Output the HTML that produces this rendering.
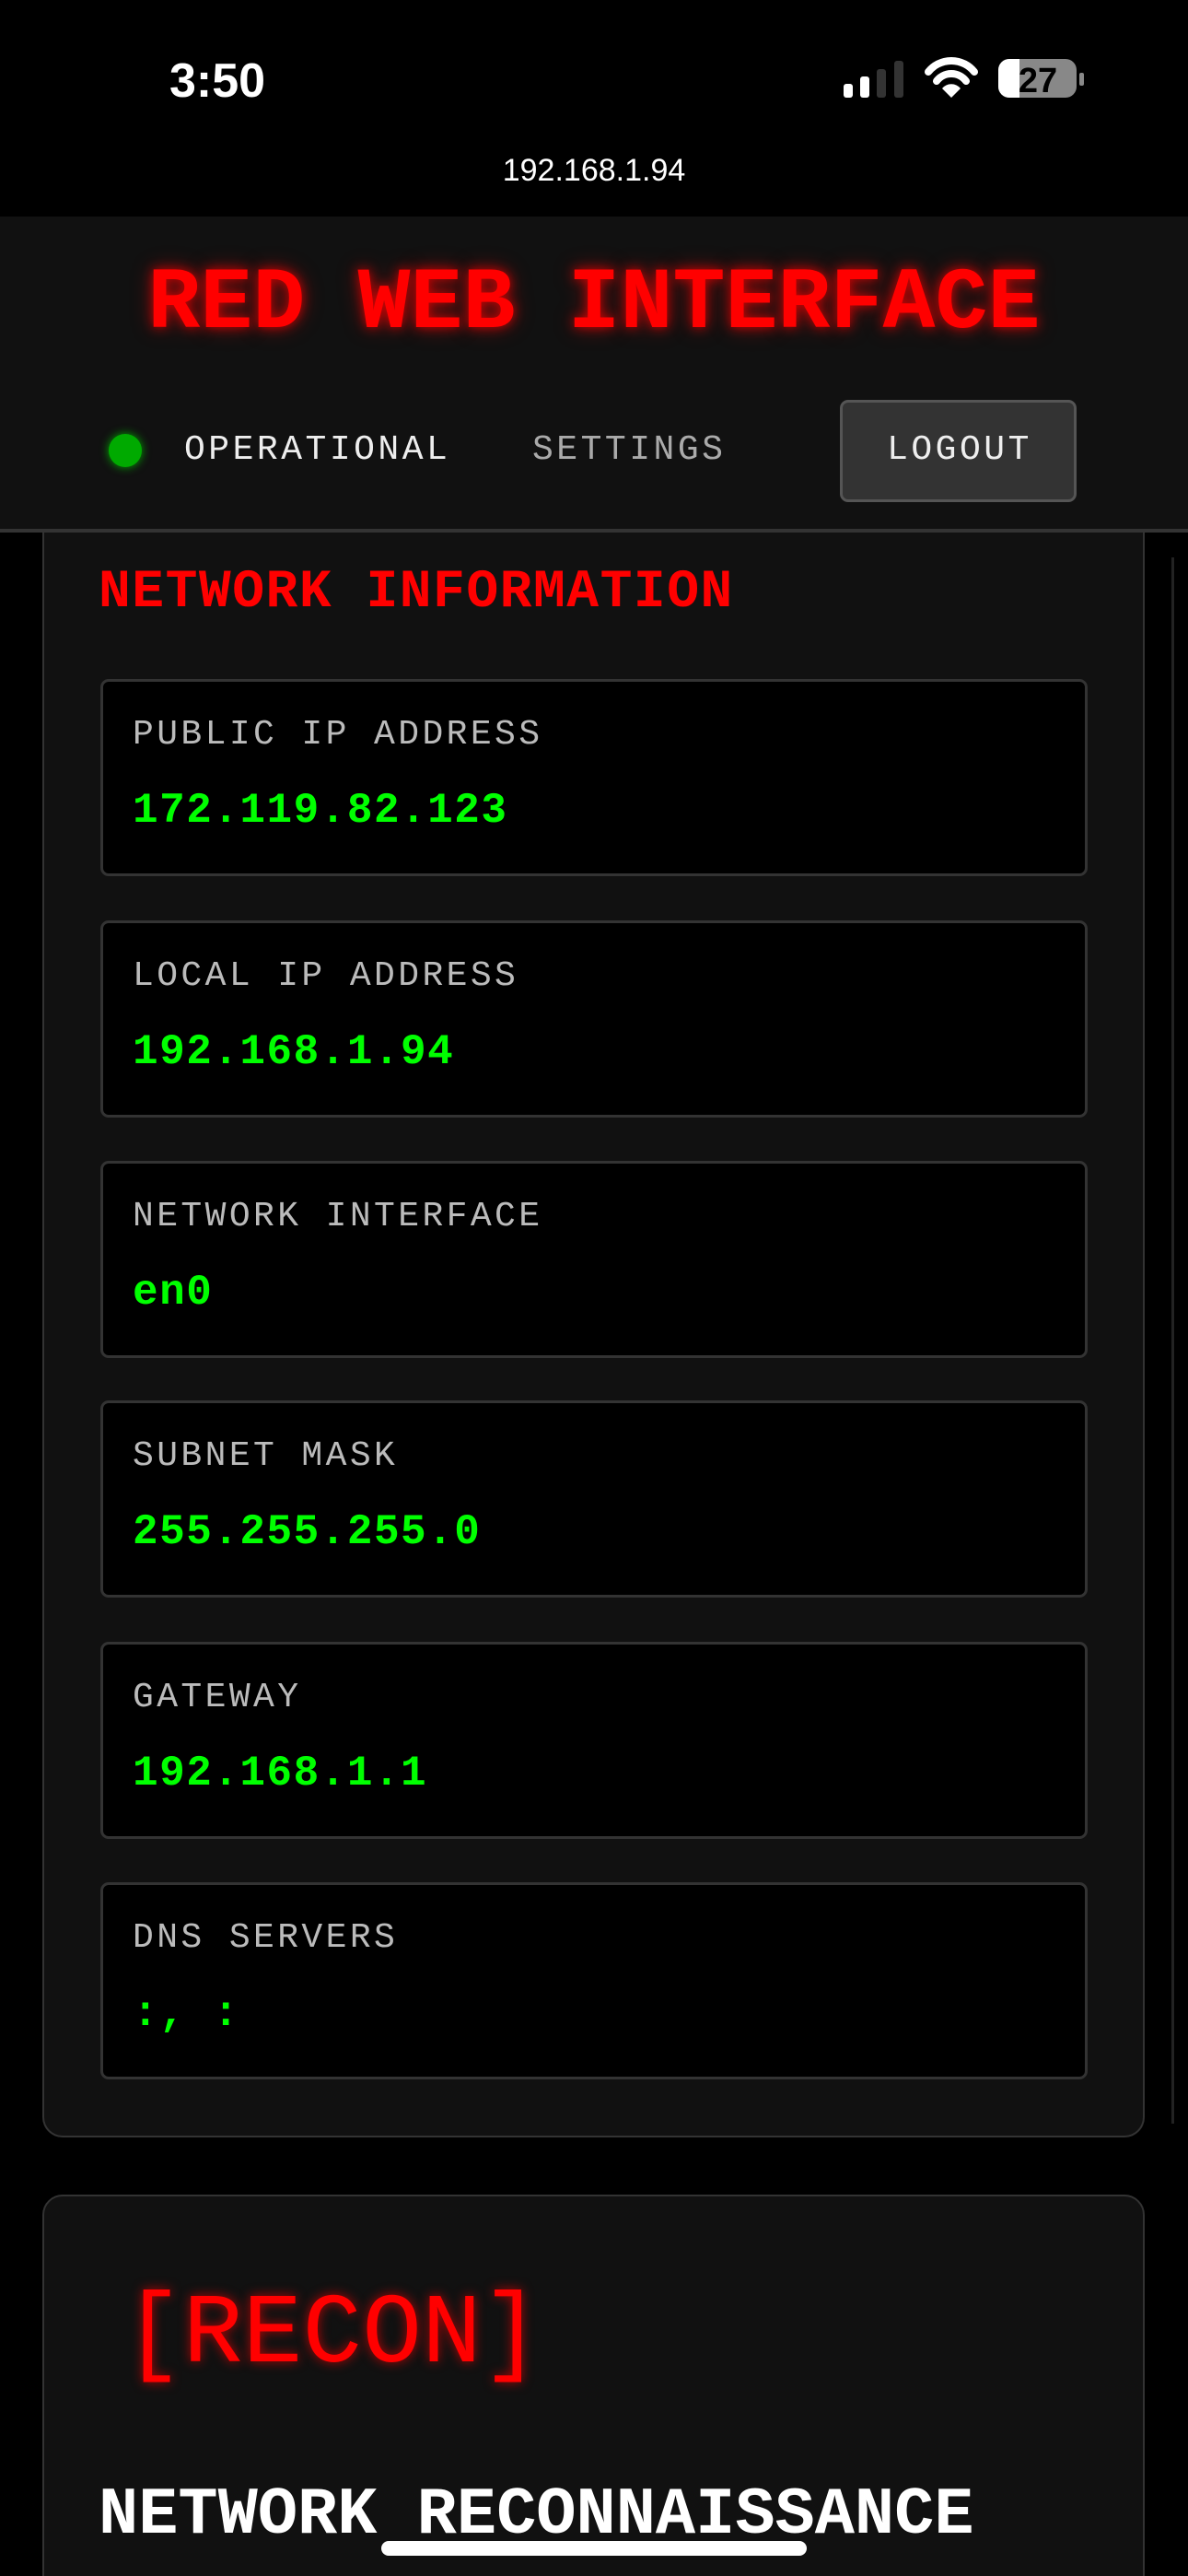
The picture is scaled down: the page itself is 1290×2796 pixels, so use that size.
<!DOCTYPE html>
<html><head><meta charset="utf-8"><style>
*{margin:0;padding:0;box-sizing:border-box}
html,body{width:1290px;height:2796px;background:#000;overflow:hidden}
body{position:relative;font-family:"Liberation Mono","Courier New",monospace}
.abs{position:absolute}
.sys{font-family:"Liberation Sans",sans-serif;color:#fff}
.header{left:0;top:235px;width:1290px;height:343px;background:#111;border-bottom:4px solid #333}
.title{left:0;width:1290px;top:282px;text-align:center;font-weight:bold;font-size:95px;line-height:96px;color:#f00;text-shadow:0 0 12px rgba(255,0,0,.75),0 0 24px rgba(255,0,0,.4);white-space:pre}
.nav{font-size:38px;line-height:40px;letter-spacing:3.5px;white-space:pre}
.card{left:46px;width:1197px;background:#111;border:2px solid #333;border-radius:22px}
.box{left:109px;width:1072px;height:214px;background:#000;border:3px solid #333;border-radius:9px}
.lbl{position:absolute;left:32px;top:38px;font-size:38px;line-height:40px;letter-spacing:3.4px;color:#bbb;white-space:pre}
.val{position:absolute;left:32px;top:115px;font-size:46px;line-height:50px;letter-spacing:1.5px;color:#0f0;font-weight:bold;white-space:pre}
</style></head><body>
<div class="abs sys" style="left:184px;top:58px;font-size:52px;font-weight:bold;line-height:60px">3:50</div>
<svg class="abs" style="left:900px;top:40px" width="300" height="100" viewBox="900 40 300 100">
<rect x="916" y="91" width="10" height="15" rx="3" fill="#fff"/>
<rect x="934" y="83" width="10" height="23" rx="3" fill="#fff"/>
<rect x="952" y="75" width="10" height="31" rx="3" fill="#333"/>
<rect x="971" y="66" width="10" height="40" rx="3" fill="#333"/>
<path d="M1008 78 A32 32 0 0 1 1058 78" stroke="#fff" stroke-width="8" fill="none" stroke-linecap="round"/>
<path d="M1017 88 A20 20 0 0 1 1049 88" stroke="#fff" stroke-width="8" fill="none" stroke-linecap="round"/>
<path d="M1023 96 L1033 106 L1043 96 A13 13 0 0 0 1023 96Z" fill="#fff"/>
<rect x="1084" y="64" width="85" height="42" rx="12" fill="#888"/>
<path d="M1096 64 H1107 V106 H1096 A12 12 0 0 1 1084 94 V76 A12 12 0 0 1 1096 64Z" fill="#fff"/>
<rect x="1172" y="79" width="5" height="14" rx="2" fill="#888"/>
<text x="1127" y="100" text-anchor="middle" font-family="Liberation Sans" font-weight="bold" font-size="38" fill="#000">27</text>
</svg>
<div class="abs sys" style="left:0;width:1290px;text-align:center;top:165px;font-size:34px;line-height:40px">192.168.1.94</div>

<div class="abs header"></div>
<div class="abs title">RED WEB INTERFACE</div>
<div class="abs" style="left:118px;top:471px;width:36px;height:36px;border-radius:50%;background:#0a0;box-shadow:0 0 10px #0a0"></div>
<div class="abs nav" style="left:200px;top:469px;color:#eee">OPERATIONAL</div>
<div class="abs nav" style="left:578px;top:469px;color:#aaa">SETTINGS</div>
<div class="abs" style="left:912px;top:434px;width:257px;height:111px;background:#333;border:3px solid #555;border-radius:9px"></div>
<div class="abs nav" style="left:912px;width:257px;text-align:center;top:469px;color:#eee;padding-left:3px">LOGOUT</div>

<div class="abs card" style="top:560px;height:1760px;border-top:none;border-radius:0 0 22px 22px"></div>
<div class="abs header" style="height:343px;border-bottom:4px solid #333"></div>
<div class="abs title">RED WEB INTERFACE</div>
<div class="abs" style="left:118px;top:471px;width:36px;height:36px;border-radius:50%;background:#0a0;box-shadow:0 0 10px #0a0"></div>
<div class="abs nav" style="left:200px;top:469px;color:#eee">OPERATIONAL</div>
<div class="abs nav" style="left:578px;top:469px;color:#aaa">SETTINGS</div>
<div class="abs" style="left:912px;top:434px;width:257px;height:111px;background:#333;border:3px solid #555;border-radius:9px"></div>
<div class="abs nav" style="left:912px;width:257px;text-align:center;top:469px;color:#eee;padding-left:3px">LOGOUT</div>
<div class="abs" style="left:1272px;top:605px;width:3px;height:1700px;background:#222"></div>

<div class="abs" style="left:107px;top:612px;font-size:58px;line-height:64px;font-weight:bold;color:#f00;letter-spacing:1.5px;white-space:pre">NETWORK INFORMATION</div>

<div class="abs box" style="top:737px"><div class="lbl">PUBLIC IP ADDRESS</div><div class="val">172.119.82.123</div></div>
<div class="abs box" style="top:999px"><div class="lbl">LOCAL IP ADDRESS</div><div class="val">192.168.1.94</div></div>
<div class="abs box" style="top:1260px"><div class="lbl">NETWORK INTERFACE</div><div class="val">en0</div></div>
<div class="abs box" style="top:1520px"><div class="lbl">SUBNET MASK</div><div class="val">255.255.255.0</div></div>
<div class="abs box" style="top:1782px"><div class="lbl">GATEWAY</div><div class="val">192.168.1.1</div></div>
<div class="abs box" style="top:2043px"><div class="lbl">DNS SERVERS</div><div class="val">:, :</div></div>

<div class="abs card" style="top:2382px;height:500px"></div>
<div class="abs" style="left:134px;top:2470px;font-size:108px;line-height:130px;color:#f00;text-shadow:0 0 12px rgba(255,0,0,.7);white-space:pre">[RECON]</div>
<div class="abs" style="left:107px;top:2688px;font-size:72px;line-height:84px;font-weight:bold;color:#fff;white-space:pre">NETWORK RECONNAISSANCE</div>
<div class="abs" style="left:414px;top:2758px;width:462px;height:16px;border-radius:8px;background:#fff"></div>
</body></html>
